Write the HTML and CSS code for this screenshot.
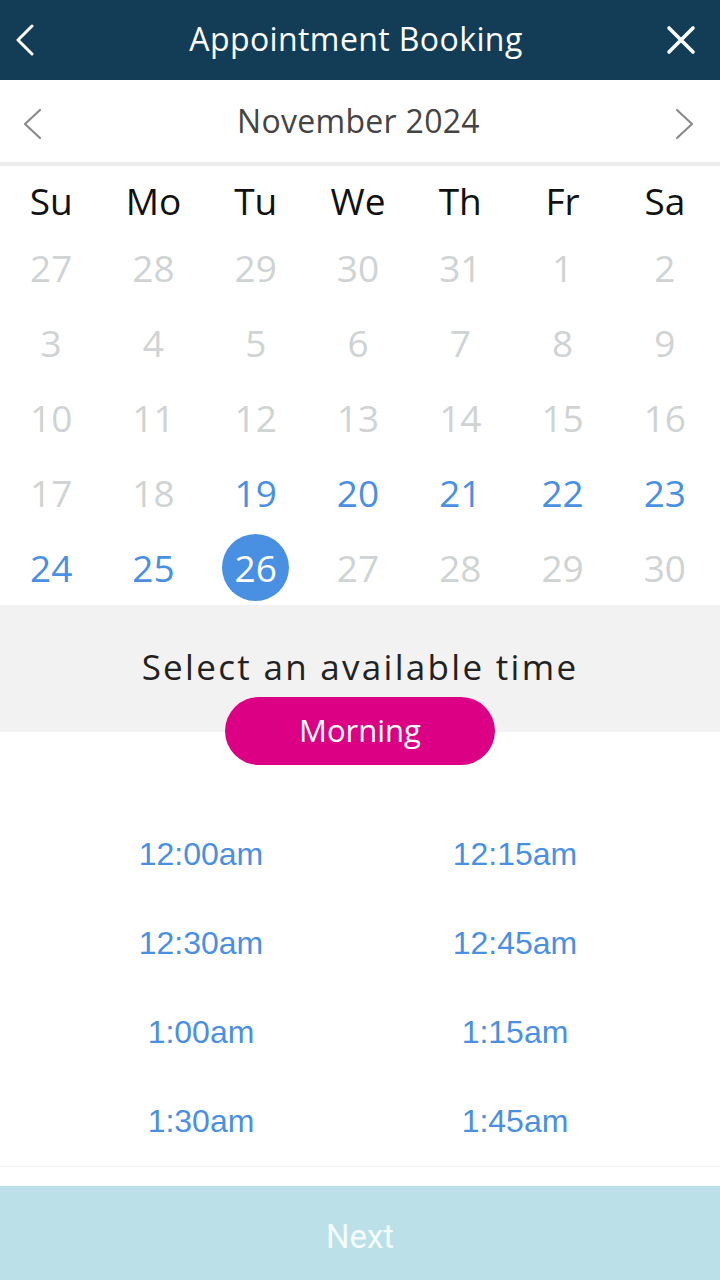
FILE: index.html
```html
<!DOCTYPE html>
<html lang="en">
<head>
    <meta charset="UTF-8">
    <meta name="viewport" content="width=device-width, initial-scale=1.0">
    <title>Appointment Booking</title>
    <link rel="stylesheet" href="styles.css">
</head>
<body>
    <div class="app">
        <header class="top-bar">
            <button class="icon-btn" aria-label="Back">
                <svg width="22" height="34" viewBox="0 0 22 34"><polyline points="16,3 2,17 16,31" fill="none" stroke="#fff" stroke-width="3" stroke-linecap="round" stroke-linejoin="round"/></svg>
            </button>
            <h1>Appointment Booking</h1>
            <button class="icon-btn" aria-label="Close">
                <svg width="30" height="30" viewBox="0 0 30 30"><path d="M3 3 L27 27 M27 3 L3 27" fill="none" stroke="#fff" stroke-width="3.6" stroke-linecap="round"/></svg>
            </button>
        </header>

        <div class="month-nav">
            <button class="nav-btn" aria-label="Previous month">
                <svg width="20" height="32" viewBox="0 0 20 32"><polyline points="17,2 2,16 17,30" fill="none" stroke="#8a8a8a" stroke-width="2.2" stroke-linecap="round" stroke-linejoin="round"/></svg>
            </button>
            <div class="month-title">November 2024</div>
            <button class="nav-btn" aria-label="Next month">
                <svg width="20" height="32" viewBox="0 0 20 32"><polyline points="3,2 18,16 3,30" fill="none" stroke="#8a8a8a" stroke-width="2.2" stroke-linecap="round" stroke-linejoin="round"/></svg>
            </button>
        </div>

        <div class="calendar">
            <div class="weekdays">
                <span>Su</span><span>Mo</span><span>Tu</span><span>We</span><span>Th</span><span>Fr</span><span>Sa</span>
            </div>
            <div class="days">
                <span class="day off">27</span><span class="day off">28</span><span class="day off">29</span><span class="day off">30</span><span class="day off">31</span><span class="day off">1</span><span class="day off">2</span>
                <span class="day off">3</span><span class="day off">4</span><span class="day off">5</span><span class="day off">6</span><span class="day off">7</span><span class="day off">8</span><span class="day off">9</span>
                <span class="day off">10</span><span class="day off">11</span><span class="day off">12</span><span class="day off">13</span><span class="day off">14</span><span class="day off">15</span><span class="day off">16</span>
                <span class="day off">17</span><span class="day off">18</span><span class="day open">19</span><span class="day open">20</span><span class="day open">21</span><span class="day open">22</span><span class="day open">23</span>
                <span class="day open">24</span><span class="day open">25</span><span class="day selected"><b>26</b></span><span class="day off">27</span><span class="day off">28</span><span class="day off">29</span><span class="day off">30</span>
            </div>
        </div>

        <div class="time-head">
            <h2>Select an available time</h2>
            <button class="period-pill">Morning</button>
        </div>

        <div class="slots">
            <button class="slot">12:00am</button>
            <button class="slot">12:15am</button>
            <button class="slot">12:30am</button>
            <button class="slot">12:45am</button>
            <button class="slot">1:00am</button>
            <button class="slot">1:15am</button>
            <button class="slot">1:30am</button>
            <button class="slot">1:45am</button>
        </div>

        <div class="footer">
            <button class="next-btn" disabled>Next</button>
        </div>
    </div>
</body>
</html>
```

FILE: styles.css
```css
body {
    margin: 0;
    font-family: "Open Sans", Arial, sans-serif;
    background: #fff;
}
button {
    font-family: inherit;
    border: none;
    background: none;
    padding: 0;
    cursor: pointer;
}
.app {
    width: 720px;
    height: 1280px;
    display: flex;
    flex-direction: column;
    overflow: hidden;
}
.top-bar {
    height: 80px;
    background-color: #133d57;
    display: flex;
    align-items: center;
    justify-content: space-between;
    padding: 0 24px 0 16px;
    box-sizing: border-box;
}
.top-bar h1 {
    margin: 0;
    color: #fff;
    font-size: 32px;
    font-weight: 400;
    letter-spacing: 0.4px;
    padding: 0 0 4px 8px;
}
.icon-btn {
    display: flex;
    align-items: center;
}
.month-nav {
    height: 82px;
    display: flex;
    align-items: center;
    justify-content: space-between;
    padding: 0 26px 0 23px;
    border-bottom: 4px solid #ececec;
}
.month-title {
    font-size: 32px;
    color: #444;
    letter-spacing: 0.3px;
    padding-bottom: 2px;
}
.nav-btn {
    display: flex;
    align-items: center;
    padding-top: 6px;
}
.weekdays,
.days {
    display: grid;
    grid-template-columns: repeat(7, 1fr);
    padding: 0 4px 0 0;
}
.weekdays span {
    height: 64px;
    display: flex;
    align-items: center;
    justify-content: center;
    font-size: 37px;
    color: #111;
    padding-top: 4px;
    box-sizing: border-box;
}
.day {
    height: 75px;
    display: flex;
    align-items: center;
    justify-content: center;
    font-size: 37px;
}
.day.off {
    color: #cfd3d3;
}
.day.open {
    color: #4a90e2;
}
.day.selected b {
    width: 67px;
    height: 67px;
    border-radius: 50%;
    background-color: #4a90e2;
    color: #fff;
    font-weight: 400;
    display: flex;
    align-items: center;
    justify-content: center;
}
.time-head {
    background-color: #f2f2f2;
    height: 127px;
    display: flex;
    flex-direction: column;
    align-items: center;
    padding-top: 40px;
    box-sizing: border-box;
}
.time-head h2 {
    margin: 0;
    font-size: 35px;
    font-weight: 400;
    color: #222;
    letter-spacing: 2.3px;
    line-height: 44px;
}
.period-pill {
    margin-top: 8px;
    width: 270px;
    height: 68px;
    flex-shrink: 0;
    border-radius: 34px;
    background-color: #dc0084;
    color: #fff;
    font-size: 31px;
    padding-bottom: 3px;
}
.slots {
    display: grid;
    grid-template-columns: 1fr 1fr;
    grid-auto-rows: 89px;
    padding: 78px 48px 0 44px;
    height: 356px;
    border-bottom: 1px solid #eeeeee;
}
.slot {
    font-family: "Liberation Sans", Arial, sans-serif;
    font-size: 32px;
    color: #4a90e2;
}
.footer {
    margin-top: auto;
}
.next-btn {
    width: 100%;
    height: 94px;
    background-color: #bce0e7;
    color: #f4fbfc;
    font-family: Roboto, Arial, sans-serif;
    font-size: 33px;
    padding-top: 6px;
    cursor: default;
}
```
